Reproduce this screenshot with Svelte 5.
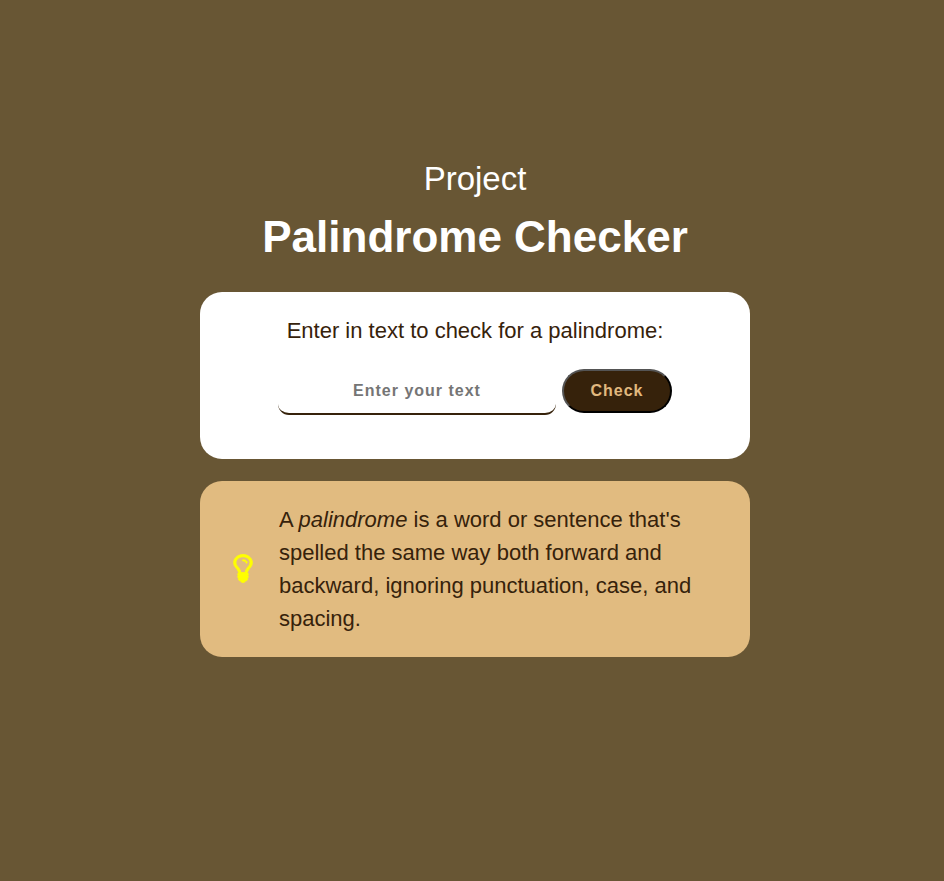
<script>
  let text = $state('');
  let result = $state('');

  function check(event) {
    event.preventDefault();
    const cleaned = text.toLowerCase().replace(/[^a-z0-9]/g, '');
    if (!cleaned) {
      result = '';
      return;
    }
    const reversed = [...cleaned].reverse().join('');
    result = `${text} ${cleaned === reversed ? 'is' : 'is not'} a palindrome`;
  }
</script>

<main>
  <h2>Project</h2>
  <h1>Palindrome Checker</h1>

  <section class="card checker">
    <label for="text-input">Enter in text to check for a palindrome:</label>
    <form onsubmit={check}>
      <input id="text-input" type="text" placeholder="Enter your text" bind:value={text} />
      <button type="submit">Check</button>
    </form>
    <output for="text-input">{result}</output>
  </section>

  <section class="card info">
    <svg class="bulb" viewBox="-24 104 1072 1584" aria-hidden="true">
      <path d="M736 576q0 13-9.5 22.5t-22.5 9.5-22.5-9.5-9.5-22.5q0-46-54-71t-106-25q-13 0-22.5-9.5t-9.5-22.5 9.5-22.5 22.5-9.5q50 0 99.5 16t87 54 37.5 90zm160 0q0-72-34.5-134t-90-101.5-123-62-136.5-22.5-136.5 22.5-123 62-90 101.5-34.5 134q0 101 68 180 10 11 30.5 33t30.5 33q128 153 141 298h228q13-145 141-298 10-11 30.5-33t30.5-33q68-79 68-180zm128 0q0 155-103 268-45 49-74.5 87t-59.5 95.5-34 107.5q47 28 47 82 0 37-25 64 25 27 25 64 0 52-45 81 13 23 13 47 0 46-31.5 71t-77.5 25q-20 44-60 70t-87 26-87-26-60-70q-46 0-77.5-25t-31.5-71q0-24 13-47-45-29-45-81 0-37 25-64-25-27-25-64 0-54 47-82-4-50-34-107.5t-59.5-95.5-74.5-87q-103-113-103-268 0-99 44.5-184.5t117-142 164-89 186.5-32.5 186.5 32.5 164 89 117 142 44.5 184.5z" />
    </svg>
    <p>
      A <em>palindrome</em> is a word or sentence that's spelled the same way both forward and
      backward, ignoring punctuation, case, and spacing.
    </p>
  </section>
</main>

<style>
  :global(body) {
    background: #685634;
  }

  main {
    box-sizing: border-box;
    min-height: 100vh;
    padding: 154px 0 44px 6px;
    display: flex;
    flex-direction: column;
    align-items: center;
    font-family: Arial, 'Liberation Sans', sans-serif;
    font-size: 22px;
    line-height: 33px;
    color: #36220b;
  }

  h1,
  h2 {
    margin: 0;
    color: #fff;
    text-align: center;
  }

  h2 {
    font-size: 33px;
    font-weight: 400;
    line-height: 50px;
  }

  h1 {
    margin-bottom: 22px;
    font-size: 44px;
    line-height: 66px;
  }

  .card {
    box-sizing: border-box;
    width: 100%;
    max-width: 550px;
    padding: 22px;
    border-radius: 22px;
  }

  .checker {
    display: flex;
    flex-direction: column;
    align-items: center;
    margin-bottom: 22px;
    background: #fff;
    text-align: center;
  }

  form {
    display: flex;
    align-items: flex-start;
    gap: 6px;
    margin: 22px 0;
  }

  input,
  button {
    box-sizing: border-box;
    padding: 0;
    font-family: inherit;
    font-size: 16px;
    font-weight: 700;
    letter-spacing: 1px;
    text-align: center;
  }

  input {
    width: 278px;
    height: 46px;
    border: 0;
    border-bottom: 2px solid #36220b;
    border-radius: 11px;
    outline: none;
    background: #fff;
    color: #36220b;
  }

  input::placeholder {
    color: #757575;
  }

  button {
    width: 110px;
    height: 44px;
    border: 2px outset #000;
    border-radius: 22px;
    background: #36220b;
    color: #e1b97f;
    cursor: pointer;
  }

  .info {
    display: flex;
    align-items: center;
    gap: 26px;
    padding-left: 33px;
    background: #e1bb80;
  }

  .bulb {
    flex: none;
    width: 20px;
    height: 29px;
    margin-bottom: 2px;
    fill: #ff0;
    stroke: #ff0;
    stroke-width: 48px;
  }

  p {
    margin: 0;
  }
</style>
